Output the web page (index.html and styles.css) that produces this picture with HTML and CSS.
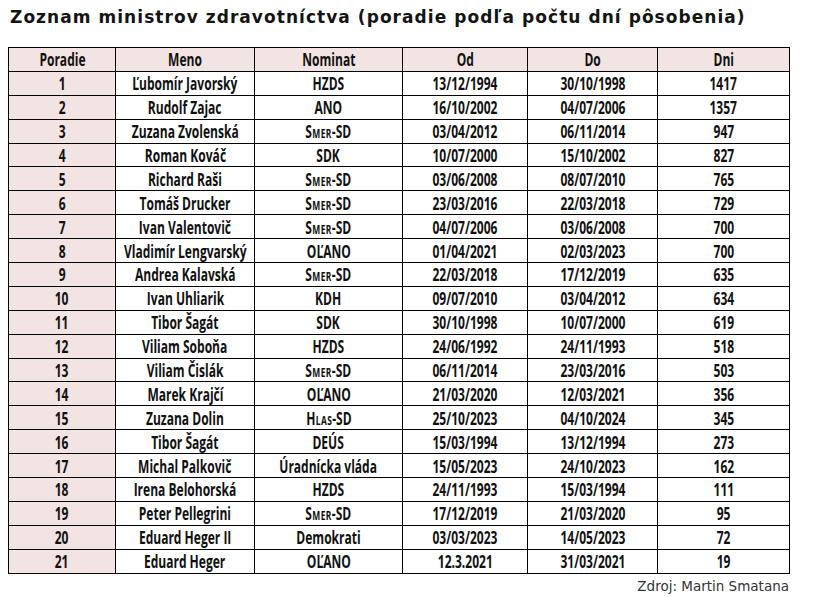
FILE: index.html
```html
<!DOCTYPE html>
<html lang="sk">
<head>
<meta charset="utf-8">
<title>Zoznam ministrov zdravotníctva</title>
<link rel="stylesheet" href="styles.css">
</head>
<body>
<div class="page">
  <h1 class="title">Zoznam ministrov zdravotníctva (poradie podľa počtu dní pôsobenia)</h1>
  <table class="ministers">
    <colgroup>
      <col class="c-rank"><col class="c-name"><col class="c-party"><col class="c-from"><col class="c-to"><col class="c-days">
    </colgroup>
    <thead>
      <tr><th><span class="t">Poradie</span></th><th><span class="t">Meno</span></th><th><span class="t">Nominat</span></th><th><span class="t">Od</span></th><th><span class="t">Do</span></th><th><span class="t">Dni</span></th></tr>
    </thead>
    <tbody>
      <tr><td><span class="t">1</span></td><td><span class="t">Ľubomír Javorský</span></td><td><span class="t">HZDS</span></td><td><span class="t">13/12/1994</span></td><td><span class="t">30/10/1998</span></td><td><span class="t">1417</span></td></tr>
      <tr><td><span class="t">2</span></td><td><span class="t">Rudolf Zajac</span></td><td><span class="t">ANO</span></td><td><span class="t">16/10/2002</span></td><td><span class="t">04/07/2006</span></td><td><span class="t">1357</span></td></tr>
      <tr><td><span class="t">3</span></td><td><span class="t">Zuzana Zvolenská</span></td><td><span class="t"><span class="sc">Smer</span>-SD</span></td><td><span class="t">03/04/2012</span></td><td><span class="t">06/11/2014</span></td><td><span class="t">947</span></td></tr>
      <tr><td><span class="t">4</span></td><td><span class="t">Roman Kováč</span></td><td><span class="t">SDK</span></td><td><span class="t">10/07/2000</span></td><td><span class="t">15/10/2002</span></td><td><span class="t">827</span></td></tr>
      <tr><td><span class="t">5</span></td><td><span class="t">Richard Raši</span></td><td><span class="t"><span class="sc">Smer</span>-SD</span></td><td><span class="t">03/06/2008</span></td><td><span class="t">08/07/2010</span></td><td><span class="t">765</span></td></tr>
      <tr><td><span class="t">6</span></td><td><span class="t">Tomáš Drucker</span></td><td><span class="t"><span class="sc">Smer</span>-SD</span></td><td><span class="t">23/03/2016</span></td><td><span class="t">22/03/2018</span></td><td><span class="t">729</span></td></tr>
      <tr><td><span class="t">7</span></td><td><span class="t">Ivan Valentovič</span></td><td><span class="t"><span class="sc">Smer</span>-SD</span></td><td><span class="t">04/07/2006</span></td><td><span class="t">03/06/2008</span></td><td><span class="t">700</span></td></tr>
      <tr><td><span class="t">8</span></td><td><span class="t">Vladimír Lengvarský</span></td><td><span class="t">OĽANO</span></td><td><span class="t">01/04/2021</span></td><td><span class="t">02/03/2023</span></td><td><span class="t">700</span></td></tr>
      <tr><td><span class="t">9</span></td><td><span class="t">Andrea Kalavská</span></td><td><span class="t"><span class="sc">Smer</span>-SD</span></td><td><span class="t">22/03/2018</span></td><td><span class="t">17/12/2019</span></td><td><span class="t">635</span></td></tr>
      <tr><td><span class="t">10</span></td><td><span class="t">Ivan Uhliarik</span></td><td><span class="t">KDH</span></td><td><span class="t">09/07/2010</span></td><td><span class="t">03/04/2012</span></td><td><span class="t">634</span></td></tr>
      <tr><td><span class="t">11</span></td><td><span class="t">Tibor Šagát</span></td><td><span class="t">SDK</span></td><td><span class="t">30/10/1998</span></td><td><span class="t">10/07/2000</span></td><td><span class="t">619</span></td></tr>
      <tr><td><span class="t">12</span></td><td><span class="t">Viliam Soboňa</span></td><td><span class="t">HZDS</span></td><td><span class="t">24/06/1992</span></td><td><span class="t">24/11/1993</span></td><td><span class="t">518</span></td></tr>
      <tr><td><span class="t">13</span></td><td><span class="t">Viliam Čislák</span></td><td><span class="t"><span class="sc">Smer</span>-SD</span></td><td><span class="t">06/11/2014</span></td><td><span class="t">23/03/2016</span></td><td><span class="t">503</span></td></tr>
      <tr><td><span class="t">14</span></td><td><span class="t">Marek Krajčí</span></td><td><span class="t">OĽANO</span></td><td><span class="t">21/03/2020</span></td><td><span class="t">12/03/2021</span></td><td><span class="t">356</span></td></tr>
      <tr><td><span class="t">15</span></td><td><span class="t">Zuzana Dolin</span></td><td><span class="t"><span class="sc">Hlas</span>-SD</span></td><td><span class="t">25/10/2023</span></td><td><span class="t">04/10/2024</span></td><td><span class="t">345</span></td></tr>
      <tr><td><span class="t">16</span></td><td><span class="t">Tibor Šagát</span></td><td><span class="t">DEÚS</span></td><td><span class="t">15/03/1994</span></td><td><span class="t">13/12/1994</span></td><td><span class="t">273</span></td></tr>
      <tr><td><span class="t">17</span></td><td><span class="t">Michal Palkovič</span></td><td><span class="t">Úradnícka vláda</span></td><td><span class="t">15/05/2023</span></td><td><span class="t">24/10/2023</span></td><td><span class="t">162</span></td></tr>
      <tr><td><span class="t">18</span></td><td><span class="t">Irena Belohorská</span></td><td><span class="t">HZDS</span></td><td><span class="t">24/11/1993</span></td><td><span class="t">15/03/1994</span></td><td><span class="t">111</span></td></tr>
      <tr><td><span class="t">19</span></td><td><span class="t">Peter Pellegrini</span></td><td><span class="t"><span class="sc">Smer</span>-SD</span></td><td><span class="t">17/12/2019</span></td><td><span class="t">21/03/2020</span></td><td><span class="t">95</span></td></tr>
      <tr><td><span class="t">20</span></td><td><span class="t">Eduard Heger II</span></td><td><span class="t">Demokrati</span></td><td><span class="t">03/03/2023</span></td><td><span class="t">14/05/2023</span></td><td><span class="t">72</span></td></tr>
      <tr><td><span class="t">21</span></td><td><span class="t">Eduard Heger</span></td><td><span class="t">OĽANO</span></td><td><span class="t">12.3.2021</span></td><td><span class="t">31/03/2021</span></td><td><span class="t">19</span></td></tr>
    </tbody>
  </table>
  <p class="source">Zdroj: Martin Smatana</p>
</div>
</body>
</html>
```

FILE: styles.css
```css
html, body {
  margin: 0;
  padding: 0;
  background: #ffffff;
}

.page {
  width: 816px;
  height: 597px;
  padding: 5px 0 0 8px;
  box-sizing: border-box;
}

.title {
  margin: 0 0 0 2px;
  font-family: "DejaVu Sans", sans-serif;
  font-weight: bold;
  font-size: 17px;
  line-height: 24px;
  color: #141414;
  letter-spacing: 1.05px;
}

.ministers {
  margin-top: 18px;
  width: 781px;
  table-layout: fixed;
  border-collapse: collapse;
  font-family: "Open Sans", "Noto Sans", sans-serif;
  font-weight: 700;
  font-size: 18.5px;
  color: #111;
}

.c-rank { width: 107px; }
.c-name { width: 139px; }
.c-party { width: 148px; }
.c-from { width: 125px; }
.c-to { width: 130px; }
.c-days { width: 132px; }

.ministers th,
.ministers td {
  border: 1px solid #000;
  height: 22.9px;
  padding: 0;
  text-align: center;
  vertical-align: middle;
  white-space: nowrap;
  line-height: 20px;
  overflow: visible;
}

.ministers th {
  background: #f2e4e2;
  font-weight: 700;
}

.ministers td:first-child {
  background: #f2e4e2;
}

.t {
  display: inline-block;
  transform: scaleX(0.65);
  transform-origin: center;
  margin: 0 -60px;
}

.sc {
  font-variant: small-caps;
  letter-spacing: 0.6px;
}

.source {
  margin: 4px 27px 0 0;
  text-align: right;
  font-family: "DejaVu Sans", sans-serif;
  font-size: 13.5px;
  color: #333;
}
```
